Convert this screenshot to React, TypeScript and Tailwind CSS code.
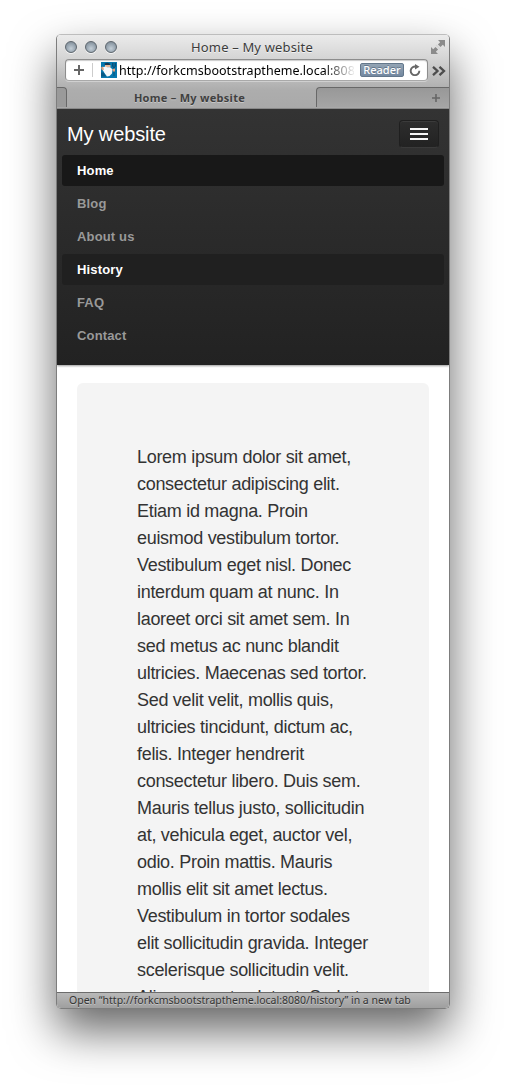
import React from "react";

const navItems = [
  { label: "Home", style: "bg-[#181818] text-white" },
  { label: "Blog", style: "text-[#999]" },
  { label: "About us", style: "text-[#999]" },
  { label: "History", style: "bg-[#202020] text-white" },
  { label: "FAQ", style: "text-[#999]" },
  { label: "Contact", style: "text-[#999]" },
];

const lines = [
  "Lorem ipsum dolor sit amet,",
  "consectetur adipiscing elit.",
  "Etiam id magna. Proin",
  "euismod vestibulum tortor.",
  "Vestibulum eget nisl. Donec",
  "interdum quam at nunc. In",
  "laoreet orci sit amet sem. In",
  "sed metus ac nunc blandit",
  "ultricies. Maecenas sed tortor.",
  "Sed velit velit, mollis quis,",
  "ultricies tincidunt, dictum ac,",
  "felis. Integer hendrerit",
  "consectetur libero. Duis sem.",
  "Mauris tellus justo, sollicitudin",
  "at, vehicula eget, auctor vel,",
  "odio. Proin mattis. Mauris",
  "mollis elit sit amet lectus.",
  "Vestibulum in tortor sodales",
  "elit sollicitudin gravida. Integer",
  "scelerisque sollicitudin velit.",
  "Aliquam erat volutpat. Sed ut",
];

function Light() {
  return (
    <span className="size-3 rounded-full border border-[#5d666e] bg-[radial-gradient(circle_at_50%_65%,#c3ced7_0%,#9ba8b3_50%,#74818c_100%)] shadow-[0_1px_0_#f4f4f4]" />
  );
}

function Plus({ className }: { className: string }) {
  return (
    <svg viewBox="0 0 10 10" className={className} stroke="currentColor" strokeWidth="2">
      <path d="M5 0v10M0 5h10" />
    </svg>
  );
}

function Favicon() {
  return (
    <svg viewBox="0 0 16 16" className="ml-2 size-4 shrink-0">
      <rect width="16" height="16" fill="#0878ae" />
      <path d="M11.500 1v3.500q1.500 2 3 0V1M13 1v13" stroke="#075078" strokeWidth="1" fill="none" />
      <path d="M3.500 1.500 6 .7l2.500.6.6 1.700H3.800z" fill="#173852" />
      <path d="M4 3h5.500v2.500H4z" fill="#e9b596" />
      <path d="M2 5 5 4.500l1 .7h3l2.500 2-.5 4.300L8.500 14 6 14.500 3.500 11 2 8.500z" fill="#f5f8fa" />
      <path d="M0 5.500l2-1 1 3-2 1zM11.500 7l2.500-.5v3h-2z" fill="#e3a27f" />
      <path d="M0 10.500h2.500l2.500 4H0z" fill="#075985" />
    </svg>
  );
}

function Toolbar() {
  return (
    <header className="flex h-[74px] shrink-0 flex-col bg-[linear-gradient(#ebebeb,#d6d6d6_22px,#adadad_55px,#a9a9a9)] font-['Noto_Sans',sans-serif]">
      <div className="flex h-[23px] shrink-0 items-center pl-2 pr-[4px]">
        <div className="flex w-[60px] gap-2">
          <Light />
          <Light />
          <Light />
        </div>
        <div className="flex-1 pr-[20px] text-center text-[13px] leading-[22px] tracking-[0.16px] text-[#3c3c3c] [text-shadow:0_1px_0_#f3f3f3]">
          Home – My website
        </div>
        <div className="flex w-[46px] justify-end">
          <svg viewBox="0 0 14 14" className="size-[14px]" fill="#8b8b8b">
            <path d="M7 0h7v7l-2.200-2.200-2.300 2.300-2.600-2.600 2.300-2.300zM0 7l2.200 2.200 2.300-2.300 2.600 2.600-2.300 2.300L7 14H0z" />
            <path d="M5 5l4 4" stroke="#d4d4d4" strokeWidth="1.200" />
          </svg>
        </div>
      </div>
      <div className="flex h-[29px] shrink-0 items-start pl-2 pt-px">
        <div className="flex h-[22px] w-[363px] items-center rounded-[4px] border border-[#8d8d8d] border-b-[#a9a9a9] bg-white shadow-[inset_0_1px_1px_#ccc,0_1px_0_#d0d0d0]">
          <Plus className="ml-[8px] size-[10px] shrink-0 text-[#666]" />
          <div className="ml-[8px] h-[14px] w-px bg-[#ccc]" />
          <Favicon />
          <div className="ml-[2px] h-5 w-[235px] shrink-0 overflow-hidden whitespace-nowrap bg-[linear-gradient(90deg,#000_205px,#eee_235px)] bg-clip-text text-[12.500px] leading-[21px] tracking-[0.02px] text-transparent">
            http://forkcmsbootstraptheme.local:808
          </div>
          <div className="ml-[6px] h-[14px] w-[44px] shrink-0 rounded-[2px] border border-[#63778b] bg-linear-to-b from-[#93a4b4] to-[#7488a0] text-center text-[11px] font-medium leading-[12px] text-white [text-shadow:0_-1px_0_#63778b]">
            Reader
          </div>
          <svg viewBox="0 0 12 12" className="ml-[5px] size-3 shrink-0" fill="none" stroke="#686868" strokeWidth="1.900">
            <path d="M10.300 6.800A4.300 4.300 0 1 1 7 2.700" />
            <path d="M6 0v5.500L10.500 2.700z" fill="#686868" stroke="none" />
          </svg>
        </div>
        <svg viewBox="0 0 14 10" className="ml-[4px] mt-[7px] h-[10px] w-[14px]" fill="none" stroke="#4d4d4d" strokeWidth="2.300">
          <path d="m1 .8 4.500 4.200L1 9.200M7.500.8 12 5 7.500 9.200" />
        </svg>
      </div>
      <div className="flex h-[22px] shrink-0 border-b border-[#8d8d8d] pb-px">
        <div className="w-[10px] rounded-tr-[4px] border-r border-t border-[#686868] bg-[#9a9a9a]" />
        <div className="w-[249px] pr-[4px] text-center text-[11px] font-bold leading-[21px] tracking-[0.28px] text-[#404040] [text-shadow:0_1px_0_#c6c6c6]">
          Home – My website
        </div>
        <div className="flex flex-1 items-center justify-end rounded-tl-[4px] border-l border-t border-[#686868] bg-linear-to-b from-[#989898] to-[#a5a5a5] pr-[9px]">
          <Plus className="size-[8px] text-[#666]" />
        </div>
      </div>
    </header>
  );
}

export default function App() {
  return (
    <div className="h-[1087px] w-[506px] overflow-hidden bg-white px-[56px] pt-[34px] font-['Liberation_Sans',sans-serif]">
      <div className="flex h-[975px] w-[394px] flex-col overflow-hidden rounded-[5px] border border-[#7d7d7d] border-t-[#bdbdbd] shadow-[0_22px_45px_rgba(0,0,0,0.6)]">
        <Toolbar />
        <nav className="z-10 h-[256px] shrink-0 bg-linear-to-b from-[#333] to-[#222] px-[5px] shadow-[0_1px_2px_rgba(0,0,0,0.4)]">
          <div className="flex h-[46px] items-center justify-between pl-[5px] pr-[5px]">
            <span className="pt-[3px] text-[20px] leading-5 tracking-[-0.12px] text-white">My website</span>
            <button className="mt-[3px] flex h-7 w-10 flex-col items-center justify-center gap-[3px] rounded-[4px] border border-[#1f1f1f] border-b-[#3a3a3a] bg-linear-to-b from-[#2d2d2d] to-[#222] shadow-[inset_0_1px_0_#3b3b3b]">
              <span className="h-[2px] w-[18px] bg-[#f5f5f5]" />
              <span className="h-[2px] w-[18px] bg-[#f5f5f5]" />
              <span className="h-[2px] w-[18px] bg-[#f5f5f5]" />
            </button>
          </div>
          <ul className="flex flex-col gap-[2px]">
            {navItems.map((n) => (
              <li key={n.label} className={"h-[31px] rounded-[3px] pl-[15px] text-[13px] font-bold leading-[31px] tracking-[0.15px] " + n.style}>
                {n.label}
              </li>
            ))}
          </ul>
        </nav>
        <main className="min-h-0 flex-1 overflow-hidden bg-white px-5 pt-[18px]">
          <div className="h-[700px] rounded-t-[6px] bg-[#f4f4f4] px-[60px] pt-[61px] text-[18px] leading-[27px] tracking-[-0.3px] text-[#333]">
            {lines.map((l) => (
              <div key={l} className="whitespace-nowrap">{l}</div>
            ))}
          </div>
        </main>
        <footer className="h-[16px] shrink-0 border-t border-[#6c6c6c] bg-linear-to-b from-[#b9b9b9] to-[#9f9f9f] pl-3 font-['Noto_Sans',sans-serif] text-[10.500px] leading-[15px] text-[#333] [text-shadow:0_1px_0_#c6c6c6]">
          Open “http://forkcmsbootstraptheme.local:8080/history” in a new tab
        </footer>
      </div>
    </div>
  );
}
